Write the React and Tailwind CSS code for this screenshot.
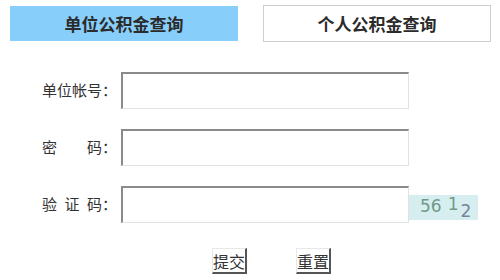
import React from 'react';

const rows = [
  { label: '单位帐号：', type: 'text' },
  { label: '密　　码：', type: 'password' },
];

function Field({ type }) {
  return (
    <input
      type={type}
      className="w-[288px] h-[37px] ml-[4px] bg-white border-t-2 border-l-2 border-b border-r border-t-[#8a8a8a] border-l-[#8a8a8a] border-b-[#e2e2e2] border-r-[#e2e2e2] outline-none"
    />
  );
}

function Btn({ children }) {
  return (
    <button className="w-[35px] h-[26px] flex items-center justify-center whitespace-nowrap text-[16px] leading-none bg-white border-t border-l border-b-2 border-r-2 border-t-[#e8e8e8] border-l-[#e8e8e8] border-b-[#555] border-r-[#555] text-[#333]">
      {children}
    </button>
  );
}

export default function App() {
  return (
    <div className="w-[500px] h-[280px] bg-white overflow-hidden text-[#333] font-['Noto_Sans_CJK_SC',sans-serif]">
      <div className="flex pt-[5px] pl-[10px] gap-[25px]">
        <div className="w-[228px] h-[35px] mt-px bg-[#87cefa] flex items-center justify-center font-bold text-[17px] text-[#2b2b2b]">
          单位公积金查询
        </div>
        <div className="w-[228px] h-[37px] border border-[#cfcfcf] bg-white flex items-center justify-center font-bold text-[17px] text-[#2b2b2b]">
          个人公积金查询
        </div>
      </div>

      <div className="mt-[30px] flex flex-col gap-[20px]">
        {rows.map((r) => (
          <div key={r.label} className="flex items-center">
            <span className="w-[117px] text-right text-[15px]">{r.label}</span>
            <Field type={r.type} />
          </div>
        ))}
        <div className="flex items-center">
          <span className="w-[117px] text-right text-[15px]">验&ensp;证&ensp;码：</span>
          <Field type="text" />
          <div className="w-[69px] h-[25px] mt-[6px] bg-[#d6eef0] flex items-start pl-[11px] font-['DejaVu_Sans',sans-serif] text-[17px] leading-none pt-[3px]">
            <span className="text-[#6f9a8a]">56</span>
            <span className="text-[#6f9a8a] ml-[6px] -mt-[2px]">1</span>
            <span className="text-[#76849a] ml-[2px] mt-[5px]">2</span>
          </div>
        </div>
      </div>

      <div className="flex mt-[25px] ml-[212px] gap-[49px]">
        <Btn>提交</Btn>
        <Btn>重置</Btn>
      </div>
    </div>
  );
}
